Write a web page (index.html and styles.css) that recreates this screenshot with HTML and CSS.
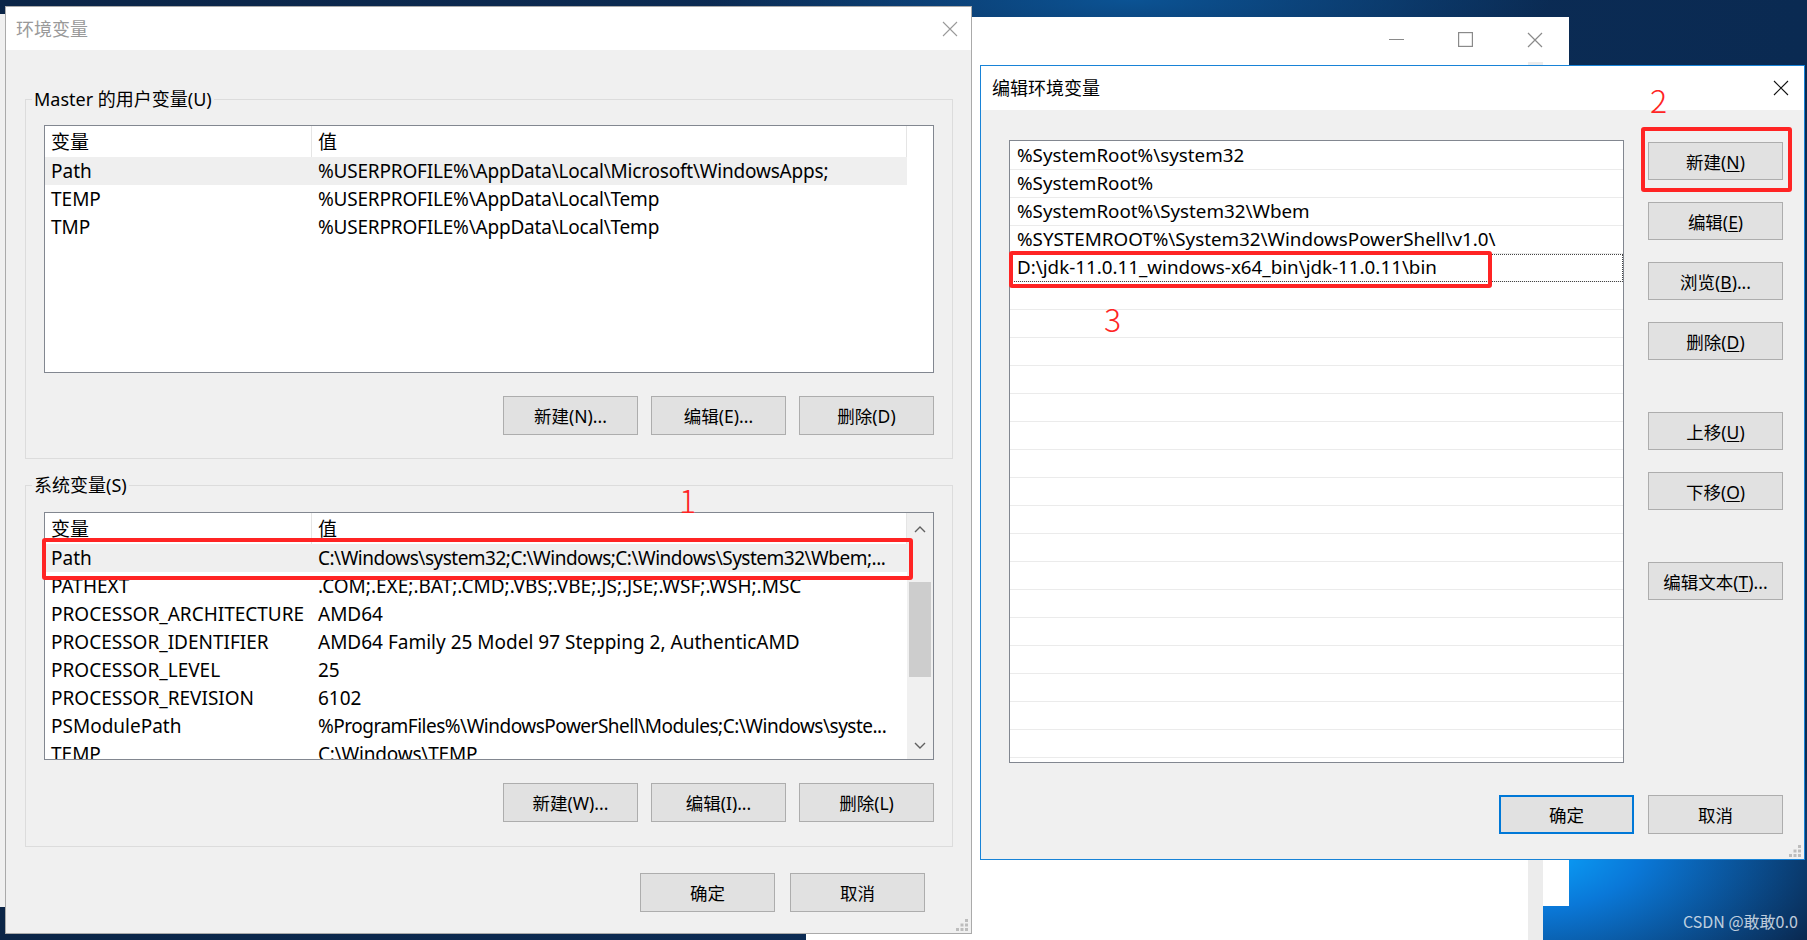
FILE: index.html
```html
<!DOCTYPE html>
<html lang="zh-CN">
<head>
    <meta charset="UTF-8" />
    <title>环境变量</title>
    <link rel="stylesheet" href="styles.css">
</head>
<body>
<div class="desktop">
    <div class="side-win"></div>

    <!-- window behind the dialogs -->
    <div class="win back-win">
        <div class="back-title">
            <span class="cap-btn"><svg width="15" height="15" viewBox="0 0 15 15"><path d="M0 7.5H15" stroke="#8a8a8a" stroke-width="1.2"/></svg></span>
            <span class="cap-btn"><svg width="15" height="15" viewBox="0 0 15 15"><rect x="0.6" y="0.6" width="13.8" height="13.8" fill="none" stroke="#8a8a8a" stroke-width="1.2"/></svg></span>
            <span class="cap-btn"><svg width="16" height="16" viewBox="0 0 16 16"><path d="M1 1L15 15M15 1L1 15" stroke="#8a8a8a" stroke-width="1.2"/></svg></span>
        </div>
        <div class="back-scroll"></div>
    </div>

    <!-- 环境变量 -->
    <div class="win env-win">
        <div class="titlebar">
            <span class="title inactive">环境变量</span>
            <svg class="close-x env-close" width="16" height="16" viewBox="0 0 16 16"><path d="M1 1L15 15M15 1L1 15" stroke="#9a9a9a" stroke-width="1.1"/></svg>
        </div>
        <div class="env-body">
            <fieldset class="group group-user">
                <legend>Master 的用户变量(U)</legend>
                <div class="group-body">
                    <div class="listview">
                        <div class="lv-cols">
                            <div class="lv-row lv-head"><span>变量</span><span>值</span></div>
                            <div class="lv-row sel"><span>Path</span><span class="path">%USERPROFILE%\AppData\Local\Microsoft\WindowsApps;</span></div>
                            <div class="lv-row"><span>TEMP</span><span class="path">%USERPROFILE%\AppData\Local\Temp</span></div>
                            <div class="lv-row"><span>TMP</span><span class="path">%USERPROFILE%\AppData\Local\Temp</span></div>
                        </div>
                    </div>
                    <div class="btn-row">
                        <button class="btn">新建(N)...</button>
                        <button class="btn">编辑(E)...</button>
                        <button class="btn">删除(D)</button>
                    </div>
                </div>
            </fieldset>

            <fieldset class="group group-sys">
                <legend>系统变量(S)</legend>
                <div class="group-body">
                    <div class="listview">
                        <div class="lv-cols">
                            <div class="lv-row lv-head"><span>变量</span><span>值</span></div>
                            <div class="lv-row sel"><span>Path</span><span class="path long">C:\Windows\system32;C:\Windows;C:\Windows\System32\Wbem;...</span></div>
                            <div class="lv-row"><span>PATHEXT</span><span>.COM;.EXE;.BAT;.CMD;.VBS;.VBE;.JS;.JSE;.WSF;.WSH;.MSC</span></div>
                            <div class="lv-row"><span>PROCESSOR_ARCHITECTURE</span><span>AMD64</span></div>
                            <div class="lv-row"><span>PROCESSOR_IDENTIFIER</span><span>AMD64 Family 25 Model 97 Stepping 2, AuthenticAMD</span></div>
                            <div class="lv-row"><span>PROCESSOR_LEVEL</span><span>25</span></div>
                            <div class="lv-row"><span>PROCESSOR_REVISION</span><span>6102</span></div>
                            <div class="lv-row"><span>PSModulePath</span><span class="path long">%ProgramFiles%\WindowsPowerShell\Modules;C:\Windows\syste...</span></div>
                            <div class="lv-row"><span>TEMP</span><span class="path">C:\Windows\TEMP</span></div>
                        </div>
                        <div class="vscroll">
                            <span class="arrow"><svg width="12" height="8" viewBox="0 0 12 8"><path d="M1 7L6 2L11 7" fill="none" stroke="#606060" stroke-width="1.4"/></svg></span>
                            <span class="thumb"></span>
                            <span class="arrow arrow-down"><svg width="12" height="8" viewBox="0 0 12 8"><path d="M1 1L6 6L11 1" fill="none" stroke="#606060" stroke-width="1.4"/></svg></span>
                        </div>
                    </div>
                    <div class="btn-row">
                        <button class="btn">新建(W)...</button>
                        <button class="btn">编辑(I)...</button>
                        <button class="btn">删除(L)</button>
                    </div>
                </div>
            </fieldset>

            <div class="dlg-foot env-foot">
                <button class="btn">确定</button>
                <button class="btn">取消</button>
            </div>
        </div>
        <svg class="grip" width="12" height="12" viewBox="0 0 12 12"><g fill="#bdbdbd"><rect x="9" y="0" width="3" height="3"/><rect x="9" y="4.5" width="3" height="3"/><rect x="4.5" y="4.5" width="3" height="3"/><rect x="9" y="9" width="3" height="3"/><rect x="4.5" y="9" width="3" height="3"/><rect x="0" y="9" width="3" height="3"/></g></svg>

        <div class="mark-box mark-sys"></div>
        <span class="mark-num num-1">1</span>
    </div>

    <!-- 编辑环境变量 -->
    <div class="win edit-win">
        <div class="titlebar edit-titlebar">
            <span class="title">编辑环境变量</span>
            <svg class="close-x edit-close" width="16" height="16" viewBox="0 0 16 16"><path d="M1 1L15 15M15 1L1 15" stroke="#111" stroke-width="1.1"/></svg>
        </div>
        <div class="edit-body">
            <div class="edit-main">
                <div class="pathlist">
                    <div class="pl-row">%SystemRoot%\system32</div>
                    <div class="pl-row">%SystemRoot%</div>
                    <div class="pl-row">%SystemRoot%\System32\Wbem</div>
                    <div class="pl-row">%SYSTEMROOT%\System32\WindowsPowerShell\v1.0\</div>
                    <div class="pl-row editing">D:\jdk-11.0.11_windows-x64_bin\jdk-11.0.11\bin</div>
                    <div class="pl-row"></div>
                    <div class="pl-row"></div>
                    <div class="pl-row"></div>
                    <div class="pl-row"></div>
                    <div class="pl-row"></div>
                    <div class="pl-row"></div>
                    <div class="pl-row"></div>
                    <div class="pl-row"></div>
                    <div class="pl-row"></div>
                    <div class="pl-row"></div>
                    <div class="pl-row"></div>
                    <div class="pl-row"></div>
                    <div class="pl-row"></div>
                    <div class="pl-row"></div>
                    <div class="pl-row"></div>
                    <div class="pl-row"></div>
                    <div class="pl-row"></div>
                </div>
                <div class="side-btns">
                    <button class="btn">新建(<u>N</u>)</button>
                    <button class="btn">编辑(<u>E</u>)</button>
                    <button class="btn">浏览(<u>B</u>)...</button>
                    <button class="btn">删除(<u>D</u>)</button>
                    <button class="btn spaced">上移(<u>U</u>)</button>
                    <button class="btn">下移(<u>O</u>)</button>
                    <button class="btn spaced">编辑文本(<u>T</u>)...</button>
                </div>
            </div>
            <div class="dlg-foot edit-foot">
                <button class="btn btn-default">确定</button>
                <button class="btn">取消</button>
            </div>
        </div>
        <svg class="grip" width="12" height="12" viewBox="0 0 12 12"><g fill="#bdbdbd"><rect x="9" y="0" width="3" height="3"/><rect x="9" y="4.5" width="3" height="3"/><rect x="4.5" y="4.5" width="3" height="3"/><rect x="9" y="9" width="3" height="3"/><rect x="4.5" y="9" width="3" height="3"/><rect x="0" y="9" width="3" height="3"/></g></svg>

        <div class="mark-box mark-new"></div>
        <span class="mark-num num-2">2</span>
        <div class="mark-box mark-jdk"></div>
        <span class="mark-num num-3">3</span>
    </div>

    <div class="watermark">CSDN @敢敢0.0</div>
</div>
</body>
</html>
```

FILE: styles.css
```css
/* Global */
* {
    box-sizing: border-box;
}

body {
    margin: 0;
    font-family: 'Noto Sans', 'Noto Sans CJK SC', sans-serif;
    font-size: 19px;
    color: #000;
}

button {
    font-family: inherit;
}

/* Desktop */
.desktop {
    position: relative;
    width: 1807px;
    height: 940px;
    overflow: hidden;
    background:
        radial-gradient(ellipse 320px 170px at 1530px 850px, #0aa8ff 0%, #0a78d8 35%, rgba(10, 70, 150, 0) 100%),
        radial-gradient(ellipse 420px 70px at 1130px 0, #0b5394 0%, rgba(11, 83, 148, 0) 100%),
        linear-gradient(90deg, #0b2547 0%, #0c2d57 55%, #0a2a52 100%);
}

.win {
    position: absolute;
    display: flex;
    flex-direction: column;
}

.side-win {
    position: absolute;
    left: 0;
    top: 14px;
    width: 6px;
    height: 893px;
    background: #f0f0f0;
}

/* Back window */
.back-win {
    left: 806px;
    top: 17px;
    width: 763px;
    height: 923px;
    background: #fff;
    clip-path: polygon(0 0, 100% 0, 100% 889px, 737px 889px, 737px 100%, 0 100%);
}

.back-title {
    display: flex;
    justify-content: flex-end;
    height: 45px;
}

.cap-btn {
    width: 69px;
    height: 45px;
    display: flex;
    align-items: center;
    justify-content: center;
}

.back-scroll {
    position: absolute;
    left: 722px;
    top: 45px;
    bottom: 0;
    width: 15px;
    background: #ececec;
}

/* Title bars */
.titlebar {
    display: flex;
    align-items: center;
    height: 43px;
    padding-left: 10px;
    background: #fff;
    flex-shrink: 0;
}

.title {
    font-size: 18px;
    line-height: 24px;
}

.title.inactive {
    color: #999;
}

.close-x {
    margin-left: auto;
}

.env-close {
    margin-right: 13px;
}

.edit-close {
    margin-right: 15px;
}

/* Buttons */
.btn {
    width: 135px;
    height: 39px;
    padding: 0;
    background: #e1e1e1;
    border: 1px solid #adadad;
    font-size: 17.5px;
    color: #000;
}

.btn u {
    text-underline-offset: 2px;
}

.btn-default {
    border: 2px solid #0078d7;
}

/* 环境变量 window */
.env-win {
    left: 5px;
    top: 6px;
    width: 967px;
    height: 928px;
    border: 1px solid #aaa;
    background: #f0f0f0;
}

.env-body {
    flex: 1;
}

.group {
    margin: 14px 18px 0 19px;
    padding: 0;
    border: 1px solid #dcdcdc;
    min-width: 0;
}

.group-user {
    margin-top: 37px;
}

.group legend {
    margin-left: 6px;
    padding: 0 2px;
    font-size: 18px;
    line-height: 24px;
}

.group-body {
    padding: 14px 18px 23px 18px;
}

.group-sys .group-body {
    padding-top: 15px;
    padding-bottom: 24px;
}

.listview {
    display: flex;
    height: 248px;
    border: 1px solid #828790;
    background: #fff;
    overflow: hidden;
}

.lv-cols {
    width: 862px;
}

.lv-row {
    display: grid;
    grid-template-columns: 267px 595px;
    height: 28px;
    line-height: 28px;
}

.lv-row span {
    padding-left: 6px;
    white-space: nowrap;
    overflow: hidden;
}

.lv-row .path {
    letter-spacing: -0.2px;
}

.lv-row .long {
    letter-spacing: -0.5px;
}

.lv-head {
    height: 31px;
    line-height: 33px;
}

.lv-head span {
    border-right: 1px solid #e5e5e5;
}

.lv-row.sel {
    background: #efefef;
}

.vscroll {
    position: relative;
    margin-left: auto;
    width: 26px;
    background: #f0f0f0;
}

.arrow {
    display: flex;
    align-items: center;
    justify-content: center;
    height: 32px;
}

.arrow-down {
    position: absolute;
    left: 0;
    right: 0;
    bottom: 0;
    height: 26px;
}

.thumb {
    position: absolute;
    left: 2px;
    right: 2px;
    top: 69px;
    height: 95px;
    background: #cdcdcd;
}

.btn-row {
    display: flex;
    justify-content: flex-end;
    gap: 13px;
    margin-top: 23px;
}

.dlg-foot {
    display: flex;
    justify-content: flex-end;
}

.env-foot {
    gap: 15px;
    margin-top: 26px;
    padding-right: 46px;
}

.grip {
    position: absolute;
    right: 3px;
    bottom: 2px;
}

/* 编辑环境变量 window */
.edit-win {
    left: 980px;
    top: 65px;
    width: 825px;
    height: 795px;
    border: 1px solid #1883d7;
    background: #f0f0f0;
}

.edit-titlebar {
    height: 44px;
    padding-left: 11px;
}

.edit-body {
    padding: 30px 21px 0 28px;
}

.edit-main {
    display: flex;
    align-items: flex-start;
    gap: 24px;
}

.pathlist {
    width: 615px;
    height: 623px;
    padding-top: 1px;
    border: 1px solid #828790;
    background: #fff;
    overflow: hidden;
    font-size: 18.8px;
}

.pl-row {
    height: 28px;
    padding-left: 7px;
    line-height: 27px;
    border-bottom: 1px solid #ebebeb;
    white-space: nowrap;
}

.pl-row.editing {
    outline: 1px dotted #444;
    outline-offset: -1px;
}

.side-btns {
    display: flex;
    flex-direction: column;
    gap: 22px;
    padding-top: 2px;
}

.side-btns .btn {
    height: 38px;
}

.side-btns .spaced {
    margin-top: 30px;
}

.edit-foot {
    gap: 14px;
    margin-top: 32px;
}

/* Red annotations */
.mark-box {
    position: absolute;
    border: 4px solid #ff2424;
    border-radius: 3px;
}

.mark-num {
    position: absolute;
    color: #ff2424;
    font-family: 'Noto Sans CJK SC', sans-serif;
    font-size: 32px;
    line-height: 32px;
    font-weight: 300;
}

.mark-sys {
    left: 36px;
    top: 531px;
    width: 871px;
    height: 42px;
}

.num-1 {
    left: 673px;
    top: 476px;
}

.mark-new {
    left: 660px;
    top: 61px;
    width: 151px;
    height: 65px;
}

.num-2 {
    left: 669px;
    top: 17px;
}

.mark-jdk {
    left: 28px;
    top: 185px;
    width: 483px;
    height: 37px;
}

.num-3 {
    left: 123px;
    top: 236px;
}

.watermark {
    position: absolute;
    left: 1683px;
    top: 910px;
    font-family: 'Noto Sans CJK SC', sans-serif;
    font-size: 16px;
    line-height: 22px;
    color: rgba(225, 232, 240, 0.85);
}
```
